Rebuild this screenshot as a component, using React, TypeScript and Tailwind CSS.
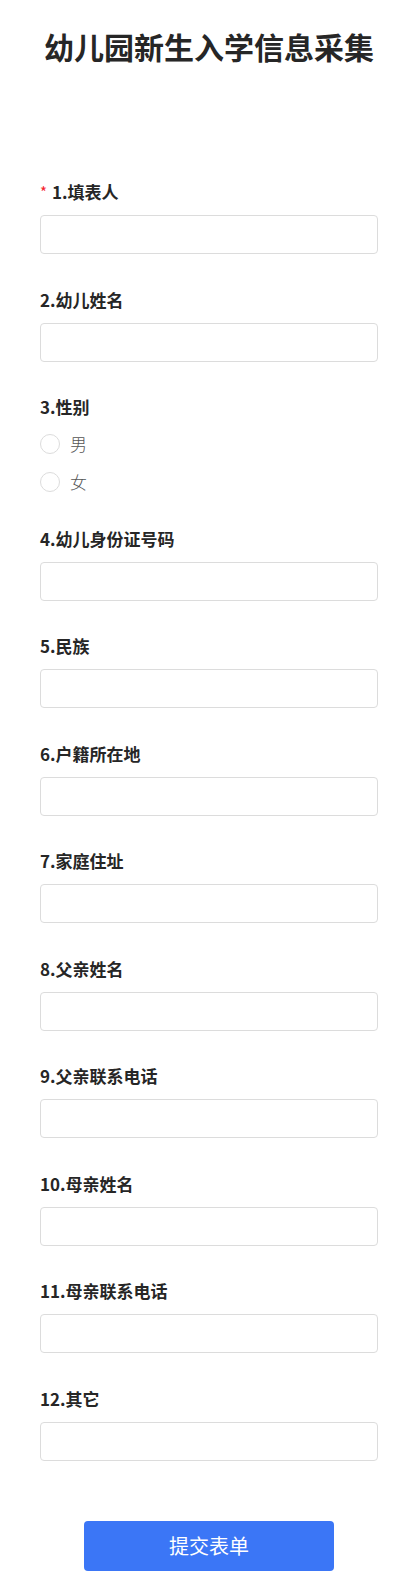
const fields: { label: string; type: "text" | "radio"; required?: boolean }[] = [
  { label: "1.填表人", type: "text", required: true },
  { label: "2.幼儿姓名", type: "text" },
  { label: "3.性别", type: "radio" },
  { label: "4.幼儿身份证号码", type: "text" },
  { label: "5.民族", type: "text" },
  { label: "6.户籍所在地", type: "text" },
  { label: "7.家庭住址", type: "text" },
  { label: "8.父亲姓名", type: "text" },
  { label: "9.父亲联系电话", type: "text" },
  { label: "10.母亲姓名", type: "text" },
  { label: "11.母亲联系电话", type: "text" },
  { label: "12.其它", type: "text" },
];

function Field({ label, type, required }: { label: string; type: "text" | "radio"; required?: boolean }) {
  return (
    <div className="flex flex-col mb-[35.5px]">
      <div className="-mt-[2px] flex items-center h-[24px] text-[17px] leading-[24px] font-bold text-[#262626]">
        {required && <span className="text-[#f5222d] text-[15px] mr-[5px] font-normal">*</span>}
        <span>{label}</span>
      </div>
      {type === "text" ? (
        <input
          type="text"
          className="mt-[11px] h-[39px] w-full rounded-[4px] border border-[#dcdcdc] bg-white px-3 outline-none"
        />
      ) : (
        <div className="mt-[15px] mb-[1px] flex flex-col gap-[18px]">
          {["男", "女"].map((opt) => (
            <label key={opt} className="flex items-center h-[20px]">
              <span className="w-[20px] h-[20px] rounded-full border border-[#dcdcdc] bg-white" />
              <span className="ml-[10px] text-[17px] text-[#555] font-light">{opt}</span>
            </label>
          ))}
        </div>
      )}
    </div>
  );
}

export default function App() {
  return (
    <div
      className="w-[418px] min-h-[1592px] bg-white px-10 pt-[26px] pb-[20px]"
      style={{ fontFamily: '"Noto Sans CJK SC", "Noto Sans", sans-serif' }}
    >
      <h1 className="text-center text-[30px] leading-[40px] font-bold text-[#262626]">幼儿园新生入学信息采集</h1>
      <form className="mt-[116px] flex flex-col">
        {fields.map((f) => (
          <Field key={f.label} {...f} />
        ))}
        <div className="flex justify-center mt-[24.5px]">
          <button
            type="button"
            className="w-[250px] h-[50px] rounded-[4px] bg-[#3b76f6] text-white text-[20px]"
          >
            提交表单
          </button>
        </div>
      </form>
    </div>
  );
}
